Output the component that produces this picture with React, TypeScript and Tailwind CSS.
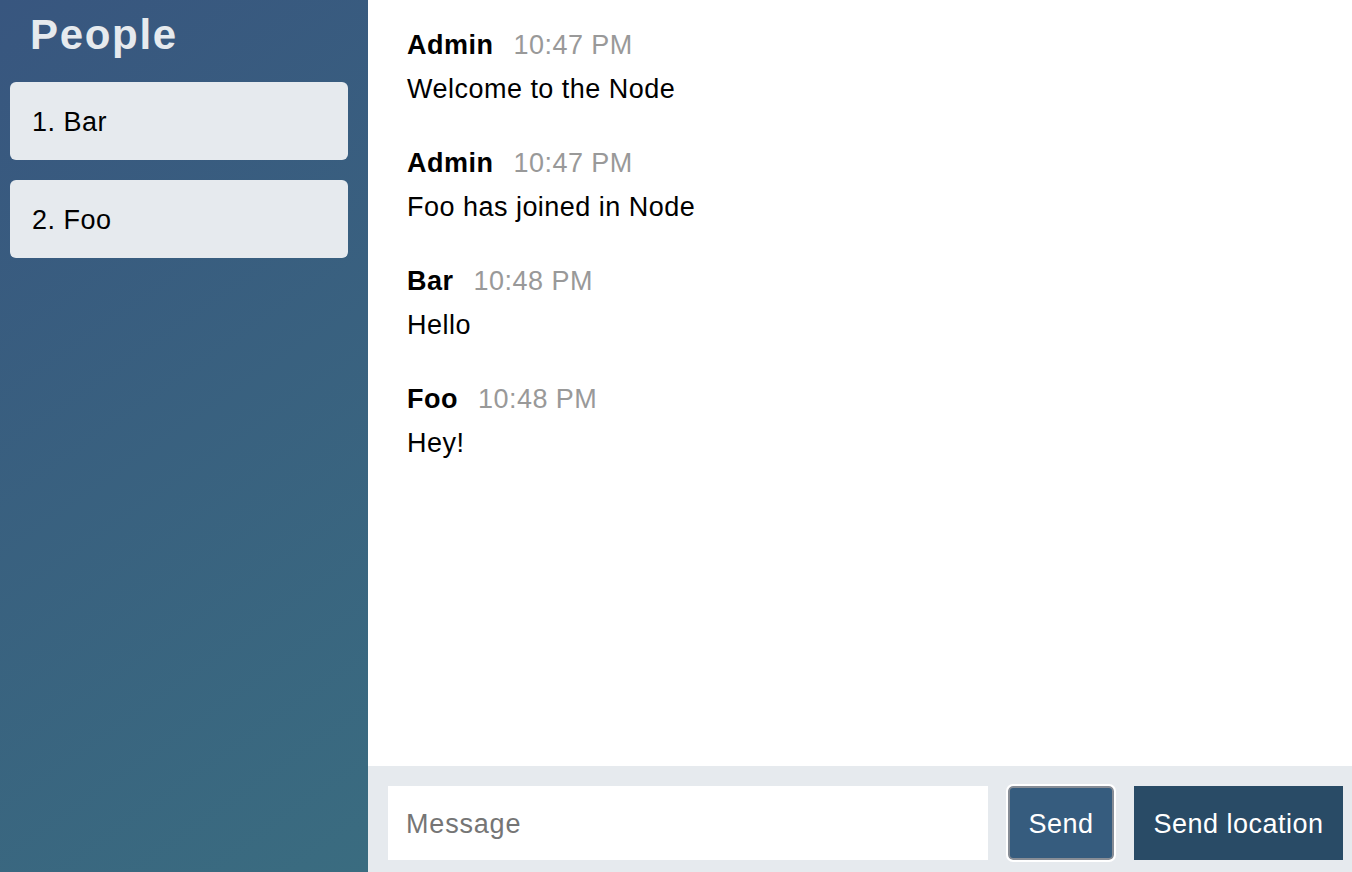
import React from "react";

const messages = [
  { name: "Admin", time: "10:47 PM", text: "Welcome to the Node" },
  { name: "Admin", time: "10:47 PM", text: "Foo has joined in Node" },
  { name: "Bar", time: "10:48 PM", text: "Hello" },
  { name: "Foo", time: "10:48 PM", text: "Hey!" },
];

export default function App() {
  return (
    <div
      className="flex h-[872px] w-[1352px] overflow-hidden tracking-[0.03em]"
      style={{ fontFamily: '"Liberation Sans", Arial, sans-serif' }}
    >
      <aside className="flex w-[368px] shrink-0 flex-col bg-[linear-gradient(325deg,#3a6c80_0%,#38567f_100%)]">
        <h3 className="h-[64px] pl-[30px] pt-[3px] text-[42px] font-bold leading-[64px] tracking-[0.04em] text-[#e6eaee]">
          People
        </h3>
        <ol className="mt-[18px] flex flex-col gap-[20px] pl-[10px] pr-[20px]">
          {["Bar", "Foo"].map((p, i) => (
            <li
              key={p}
              className="flex h-[78px] items-center rounded-[6px] bg-[#e6eaee] pl-[22px] pt-[2px] text-[27px] text-black"
            >
              {i + 1}. {p}
            </li>
          ))}
        </ol>
      </aside>
      <main className="flex min-w-0 flex-1 flex-col bg-white">
        <div className="flex-1 pl-[39px] pt-[23px]">
          {messages.map((m, i) => (
            <div key={i} className="mb-[30px]">
              <div className="flex h-[44px] items-center text-[27px] leading-[44px]">
                <span className="font-bold text-black">{m.name}</span>
                <span className="ml-[20px] text-[#999999]">{m.time}</span>
              </div>
              <div className="h-[44px] text-[27px] leading-[44px] text-black">{m.text}</div>
            </div>
          ))}
        </div>
        <footer className="flex h-[106px] shrink-0 items-start bg-[#e6eaee] pl-[20px] pr-[9px] pt-[20px]">
          <input
            placeholder="Message"
            className="h-[74px] min-w-0 flex-1 bg-white px-[18px] pt-[2px] text-[27px] tracking-[0.03em] text-black outline-none placeholder:text-[#757575]"
          />
          <button className="ml-[20px] h-[74px] w-[106px] shrink-0 rounded-[5px] border-2 border-[#878d96] bg-[#365c7e] pt-[2px] text-[27px] text-white outline outline-2 outline-white">
            Send
          </button>
          <button className="ml-[20px] h-[74px] w-[209px] shrink-0 bg-[#294b66] pt-[2px] text-[27px] text-white">
            Send location
          </button>
        </footer>
      </main>
    </div>
  );
}
